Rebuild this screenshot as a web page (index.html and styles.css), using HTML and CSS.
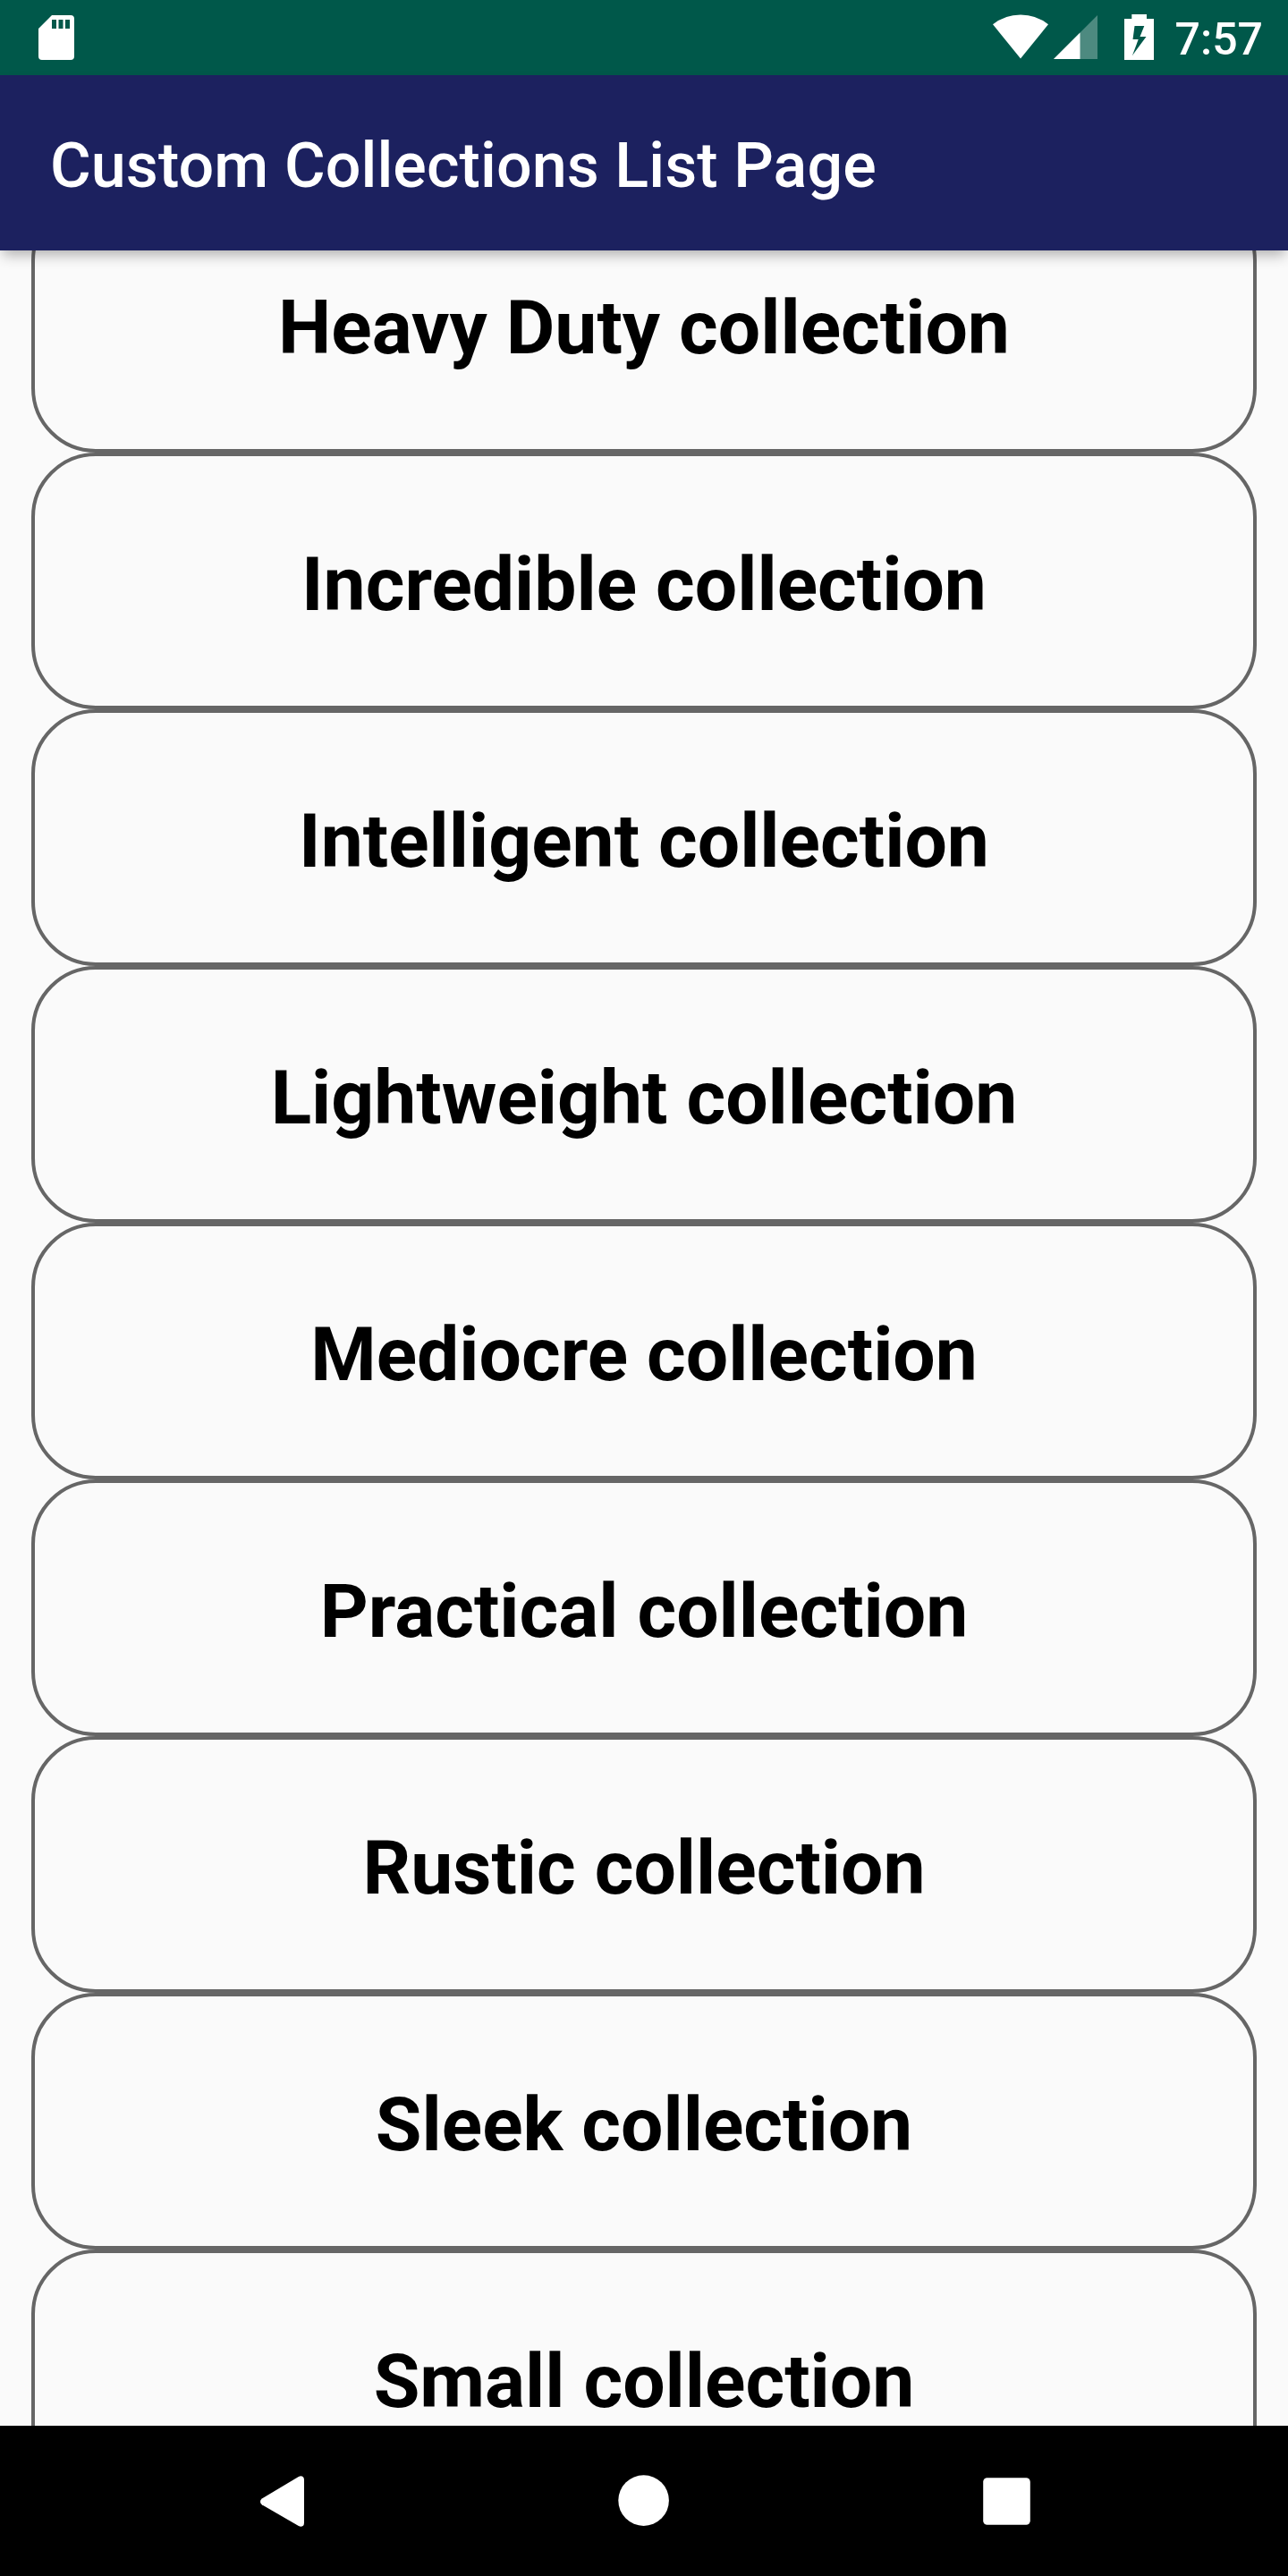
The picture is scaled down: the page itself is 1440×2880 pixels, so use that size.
FILE: index.html
```html
<!DOCTYPE html>
<html lang="en">
<head>
<meta charset="utf-8">
<title>Custom Collections List Page</title>
<link rel="stylesheet" href="styles.css">
</head>
<body>
<div class="screen">
  <div class="status-bar">
    <svg class="sd-card" width="40" height="50" viewBox="0 0 40 50">
      <path fill="#fff" fill-rule="evenodd" d="M15 0H36Q40 0 40 4V46Q40 50 36 50H4Q0 50 0 46V15ZM15 5V15H20V5ZM22.500 5V15H27.500V5ZM30 5V15H35V5Z"/>
    </svg>
    <div class="status-icons">
      <svg class="wifi" width="62" height="50" viewBox="0 0 62 50">
        <path fill="#fff" d="M31 49.500L0 11.300Q13.500 .5 31 .5T62 11.300Z"/>
      </svg>
      <svg class="signal" width="49" height="49" viewBox="0 0 49 49">
        <path fill="#fff" fill-opacity=".3" d="M0 49L49 0V49Z"/>
        <path fill="#fff" d="M0 49L29.500 19.500V49Z"/>
      </svg>
      <svg class="battery" width="33" height="51" viewBox="0 0 33 51">
        <path fill="#fff" fill-rule="evenodd" d="M8.300 0H25V5H33V51H0V5H8.300ZM11.500 13L9.500 28H15.700L9 46L24.500 25H17.500L22.300 13Z"/>
      </svg>
      <span class="clock">7:57</span>
    </div>
  </div>
  <header class="app-bar"><h1>Custom Collections List Page</h1></header>
  <main class="viewport">
    <ul class="collections">
      <li>Heavy Duty collection</li>
      <li>Incredible collection</li>
      <li>Intelligent collection</li>
      <li>Lightweight collection</li>
      <li>Mediocre collection</li>
      <li>Practical collection</li>
      <li>Rustic collection</li>
      <li>Sleek collection</li>
      <li>Small collection</li>
    </ul>
  </main>
  <nav class="nav-bar">
    <svg width="100" height="168" viewBox="0 0 100 168">
      <path fill="#fff" d="M28.800 81.600L69.800 57Q72.500 55.500 74.700 57Q76 58 76 60.500V108.500Q76 111 74.700 112Q72.500 113.500 69.800 112L28.800 88.200Q27 86.800 27 84.900T28.800 81.600Z"/>
    </svg>
    <svg width="100" height="168" viewBox="0 0 100 168"><circle cx="49.600" cy="83.600" r="28.300" fill="#fff"/></svg>
    <svg width="100" height="168" viewBox="0 0 100 168"><rect x="23.200" y="58.200" width="52.600" height="52.600" rx="4.500" fill="#fff"/></svg>
  </nav>
</div>
</body>
</html>
```
FILE: styles.css
```css
* { box-sizing: border-box; }

body {
  margin: 0;
  font-family: Roboto, "Liberation Sans", sans-serif;
}

svg { display: block; flex: none; }

.screen {
  display: flex;
  flex-direction: column;
  width: 1440px;
  height: 2880px;
  overflow: hidden;
  background: #fafafa;
}

.status-bar {
  flex: none;
  display: flex;
  justify-content: space-between;
  height: 84px;
  padding: 0 28px 0 43px;
  background: #00584a;
}

.sd-card { margin-top: 17px; }

.status-icons { display: flex; }

.wifi { margin: 16px 6px 0 0; }
.signal { margin: 17px 30px 0 0; }
.battery { margin: 16px 24px 0 0; }

.clock {
  color: #fff;
  font-size: 50px;
  font-weight: 500;
  line-height: 88px;
}

.app-bar {
  flex: none;
  display: flex;
  align-items: center;
  height: 196px;
  padding: 5px 56px 0;
  background: #1c215f;
  box-shadow: 0 8px 14px -3px rgba(0, 0, 0, .3);
  z-index: 1;
}

.app-bar h1 {
  margin: 0;
  color: #fff;
  font-size: 70px;
  font-weight: 500;
  line-height: 82px;
  letter-spacing: .09px;
}

.viewport {
  flex: 1;
  min-height: 0;
  overflow: hidden;
}

/* The list is scrolled part of the way through its first visible card. */
.collections {
  margin: -61px 35px 0;
  padding: 0;
  list-style: none;
}

.collections li {
  display: flex;
  align-items: center;
  justify-content: center;
  height: 287px;
  padding-top: 9px;
  border: 4px solid #666;
  border-radius: 72px;
  color: #000;
  font-size: 84px;
  font-weight: 700;
  line-height: 98px;
}

.nav-bar {
  flex: none;
  display: flex;
  justify-content: space-between;
  height: 168px;
  padding: 0 264px;
  background: #000;
}
```
